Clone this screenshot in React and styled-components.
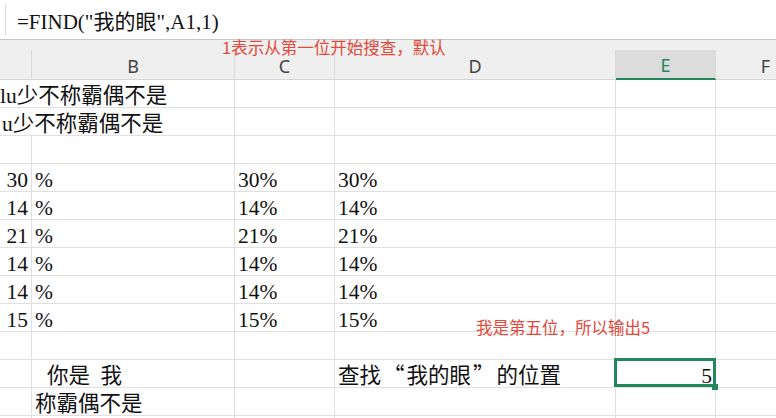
import styled, { createGlobalStyle } from 'styled-components';

const GREEN = '#22875a';
const GRID = '#e0e0e0';
const CELL_FONT = '"Liberation Serif", "Noto Sans CJK SC", serif';
const CJK_FONT = '"Noto Sans CJK SC", "Noto Sans", sans-serif';

const columns = ['A', 'B', 'C', 'D', 'E', 'F'];
const percents = ['30', '14', '21', '14', '14', '15'];

const empty = () => [{}, {}, {}, {}, {}, {}];

// built at render time so the styled spans below are defined
const buildRows = () => [
  [{ text: 'lu少不称霸偶不是', span: 2, shift: -3 }, {}, {}, {}, {}],
  [{ text: 'u少不称霸偶不是', span: 2, shift: -1 }, {}, {}, {}, {}],
  empty(),
  ...percents.map((n) => [
    { text: n, align: 'right' },
    { text: '%' },
    { text: `${n}%` },
    { text: `${n}%` },
    {},
    {},
  ]),
  empty(),
  [
    {},
    { text: '你是 我', shift: 12 },
    {},
    {
      text: (
        <>
          查找<Wide>“</Wide>我的眼<Wide>”</Wide>的位置
        </>
      ),
    },
    { text: '5', align: 'right', selected: true },
    {},
  ],
  [{}, { text: '称霸偶不是' }, {}, {}, {}, {}],
  empty(),
];

export default function App() {
  const rows = buildRows();
  return (
    <Page>
      <GlobalStyle />
      <FormulaBar>
        <BarDivider />
        <FormulaText>=FIND("我的眼",A1,1)</FormulaText>
      </FormulaBar>
      <Sheet>
        <HeaderRow>
          {columns.map((c) => (
            <HeaderCell key={c} $active={c === 'E'}>
              {c === 'A' ? '' : c}
            </HeaderCell>
          ))}
        </HeaderRow>
        {rows.map((cells, r) => (
          <Row key={r}>
            {cells.map((cell, i) => (
              <Cell
                key={i}
                $align={cell.align}
                $span={cell.span}
                $selected={cell.selected}
              >
                {cell.text && (
                  <CellText $shift={cell.shift}>{cell.text}</CellText>
                )}
              </Cell>
            ))}
          </Row>
        ))}
        <Note $top={-1} $left={222}>1表示从第一位开始搜查，默认</Note>
        <Note $top={279} $left={476}>我是第五位，所以输出5</Note>
      </Sheet>
    </Page>
  );
}

const GlobalStyle = createGlobalStyle`
  html, body {
    margin: 0;
    background: #fff;
    overflow: hidden;
  }
`;

const Page = styled.div`
  height: 100vh;
  overflow: hidden;
`;

const FormulaBar = styled.div`
  height: 39px;
  display: flex;
  align-items: center;
  padding-left: 5px;
  border-bottom: 1px solid #c6c6c6;
`;

const BarDivider = styled.div`
  width: 1px;
  height: 30px;
  background: #d6d6d6;
`;

const FormulaText = styled.div`
  margin-left: 11px;
  font-family: ${CELL_FONT};
  font-size: 21px;
  color: #111;
  white-space: nowrap;
`;

const Sheet = styled.div`
  position: relative;
`;

const gridCols = '32px 203px 100px 281px 100px 100px';

const HeaderRow = styled.div`
  display: grid;
  grid-template-columns: ${gridCols};
  height: 40px;
  align-items: end;
  background: #efefef;
`;

const HeaderCell = styled.div`
  box-sizing: border-box;
  height: 30px;
  display: flex;
  align-items: center;
  justify-content: center;
  padding-top: 2px;
  border-right: 1px solid #dadada;
  border-bottom: ${(p) => (p.$active ? `2px solid ${GREEN}` : '1px solid #d6d6d6')};
  background: ${(p) => (p.$active ? '#dcdcdc' : 'transparent')};
  color: ${(p) => (p.$active ? GREEN : '#444')};
  font-family: "Noto Sans", sans-serif;
  font-size: 18px;
`;

const Row = styled.div`
  display: grid;
  grid-template-columns: ${gridCols};
  height: 28px;
`;

const Cell = styled.div`
  position: relative;
  box-sizing: border-box;
  height: 28px;
  display: flex;
  align-items: flex-end;
  justify-content: ${(p) => (p.$align === 'right' ? 'flex-end' : 'flex-start')};
  padding: 0 3px;
  grid-column: ${(p) => (p.$span ? `span ${p.$span}` : 'auto')};
  border-right: 1px solid ${GRID};
  border-bottom: 1px solid ${GRID};
  font-family: ${CELL_FONT};
  font-size: 21.5px;
  line-height: 22px;
  word-spacing: 5px;
  color: #111;
  white-space: nowrap;

  ${(p) =>
    p.$selected &&
    `
    &::after {
      content: '';
      position: absolute;
      left: -2px;
      right: -1px;
      top: -2px;
      bottom: 0;
      border: 3px solid ${GREEN};
    }
    &::before {
      content: '';
      position: absolute;
      right: -3px;
      bottom: -3px;
      width: 6px;
      height: 6px;
      background: ${GREEN};
      z-index: 1;
    }
  `}
`;

const CellText = styled.span`
  margin-left: ${(p) => p.$shift || 0}px;
`;

const Wide = styled.span`
  font-family: ${CJK_FONT};
  padding: 0 2px;
`;

const Note = styled.div`
  position: absolute;
  top: ${(p) => p.$top}px;
  left: ${(p) => p.$left}px;
  font-family: ${CJK_FONT};
  font-size: 16.5px;
  line-height: 1;
  color: #e4483a;
  white-space: nowrap;
`;
